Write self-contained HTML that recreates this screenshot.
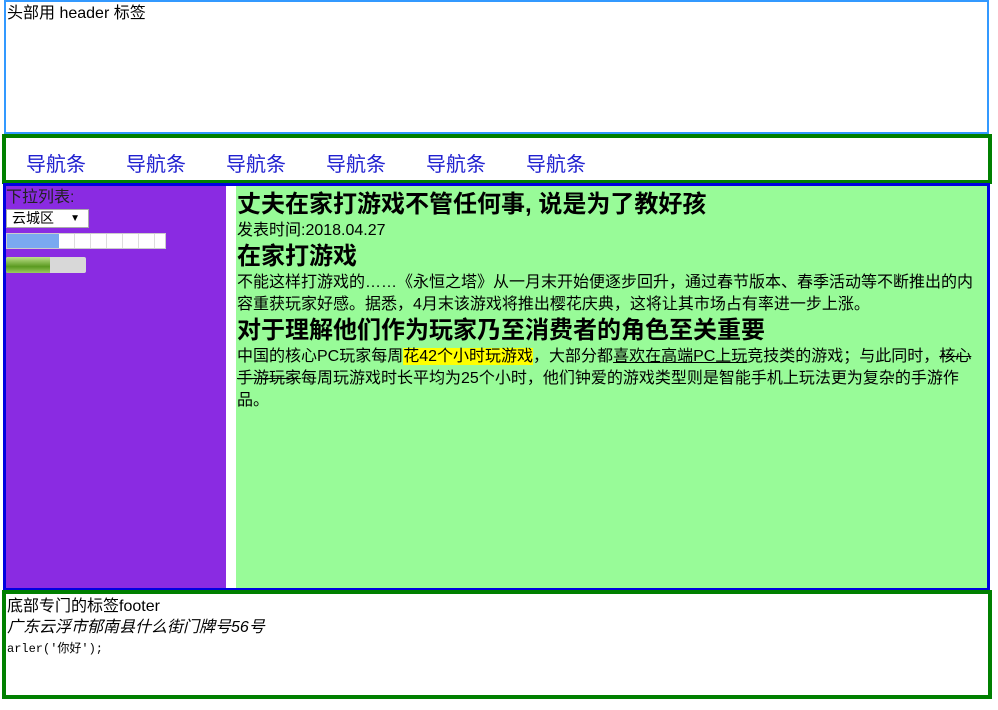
<!DOCTYPE html>
<html><head><meta charset="utf-8"><style>
*{margin:0;padding:0;box-sizing:border-box}
body{width:998px;height:710px;background:#fff;font-family:"Liberation Sans","Microsoft YaHei","Noto Sans CJK SC",sans-serif;color:#000;position:relative;overflow:hidden}
.hd{position:absolute;left:4px;top:0;width:985px;height:134px;border:2px solid #3399ff;font-size:16px;line-height:24px;padding-left:1px}
.nav{position:absolute;left:2px;top:134px;width:990px;height:50px;border:4px solid #008000}
.nav span{position:absolute;top:10px;font-size:20px;color:#2020d0}
.main{position:absolute;left:3px;top:183px;width:987px;height:408px;border:3px solid #0000e0;background:#fff}
.side{position:absolute;left:0;top:0;width:220px;height:402px;background:#8a2be2}
.cont{position:absolute;left:230px;top:0;width:751px;height:402px;background:#98fb98;font-size:16px;line-height:22px;padding-left:1px}
.cont h1{font-size:24px;line-height:30px;margin-top:4px}
.cont h2{font-size:24px;line-height:30px}
.ft{position:absolute;left:2px;top:590px;width:990px;height:109px;border:4px solid #008000;padding-left:1px}
</style></head><body>
<div class="hd">头部用 header 标签</div>
<div class="nav">
<span style="left:20px">导航条</span><span style="left:120px">导航条</span><span style="left:220px">导航条</span><span style="left:320px">导航条</span><span style="left:420px">导航条</span><span style="left:520px">导航条</span>
</div>
<div class="main">
<div class="side">
<div style="font-size:16px;line-height:20px;margin-top:2px;color:#222">下拉列表:</div>
<div style="position:absolute;left:0;top:23px;width:83px;height:19px;background:#fff;border:1px solid #aaa;font-size:14px;line-height:17px;padding-left:5px">云城区<span style="position:absolute;right:8px;font-size:10px">▼</span></div>
<div style="position:absolute;left:0;top:47px;width:160px;height:16px;background:#fff;border:1px solid #ccc;display:flex">
<div style="width:52px;background:#7aa9f0"></div>
<div style="flex:1;background:repeating-linear-gradient(90deg,#fff 0 15px,#ddd 15px 16px)"></div></div>
<div style="position:absolute;left:0;top:71px;width:80px;height:16px;background:#d8d8d8;border-radius:2px;overflow:hidden">
<div style="width:44px;height:100%;background:linear-gradient(#bde08a,#5a9a20 60%,#9acb60)"></div></div>
</div>
<div class="cont">
<h1>丈夫在家打游戏不管任何事, 说是为了教好孩</h1>
<div>发表时间:2018.04.27</div>
<h2>在家打游戏</h2>
<p>不能这样打游戏的……《永恒之塔》从一月末开始便逐步回升，通过春节版本、春季活动等不断推出的内容重获玩家好感。据悉，4月末该游戏将推出樱花庆典，这将让其市场占有率进一步上涨。</p>
<h2>对于理解他们作为玩家乃至消费者的角色至关重要</h2>
<p>中国的核心PC玩家每周<span style="background:#ffff00">花42个小时玩游戏</span>，大部分都<u>喜欢在高端PC上玩</u>竞技类的游戏；与此同时，<s>核心手游玩家</s>每周玩游戏时长平均为25个小时，他们钟爱的游戏类型则是智能手机上玩法更为复杂的手游作品。</p>
</div>
</div>
<div class="ft">
<div style="font-size:16px;line-height:22px;margin-top:2px">底部专门的标签footer</div>
<div style="font-size:16px;line-height:20px;font-style:italic">广东云浮市郁南县什么街门牌号56号</div>
<div style="font-family:'Liberation Mono','Noto Sans CJK SC',monospace;font-size:12px;line-height:22px">arler('你好');</div>
</div>
</body></html>
